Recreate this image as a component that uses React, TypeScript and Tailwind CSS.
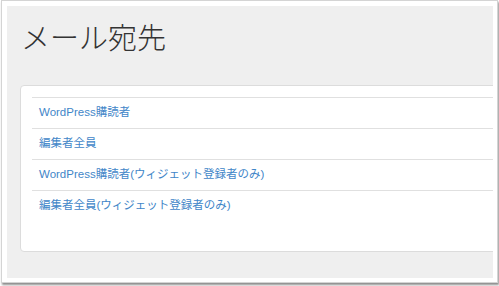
import React from "react";

const rows = [
  "WordPress購読者",
  "編集者全員",
  "WordPress購読者(ウィジェット登録者のみ)",
  "編集者全員(ウィジェット登録者のみ)",
];

export default function App() {
  return (
    <div className="w-[499px] h-[286px] bg-white overflow-hidden">
      <div className="ml-[1px] w-[497px] h-[283px] bg-white border border-[#d4d4d4] shadow-[1px_2px_2px_rgba(0,0,0,0.45)] pl-[5px] pt-[5px] pr-[4px] pb-[4px]">
        <div className="w-full h-full bg-[#efefef] overflow-hidden pl-[13px] pt-[12px]">
          <h1
            className="text-[29px] leading-[36px] text-[#333333] font-light ml-[1px]"
            style={{ fontFamily: '"Noto Sans CJK JP", "Noto Sans", sans-serif' }}
          >
            メール宛先
          </h1>
          <div className="mt-[31px] w-[620px] h-[167px] bg-white border border-[#dcdcdc] rounded-[4px] pt-[11px] pl-[11px]">
            {rows.map((r) => (
              <div
                key={r}
                className="h-[31px] border-t border-[#e0e0e0] pl-[7px] flex items-center text-[11.5px] text-[#3f86c8]"
                style={{ fontFamily: '"Liberation Sans", "Noto Sans CJK JP", sans-serif' }}
              >
                {r}
              </div>
            ))}
          </div>
        </div>
      </div>
    </div>
  );
}
